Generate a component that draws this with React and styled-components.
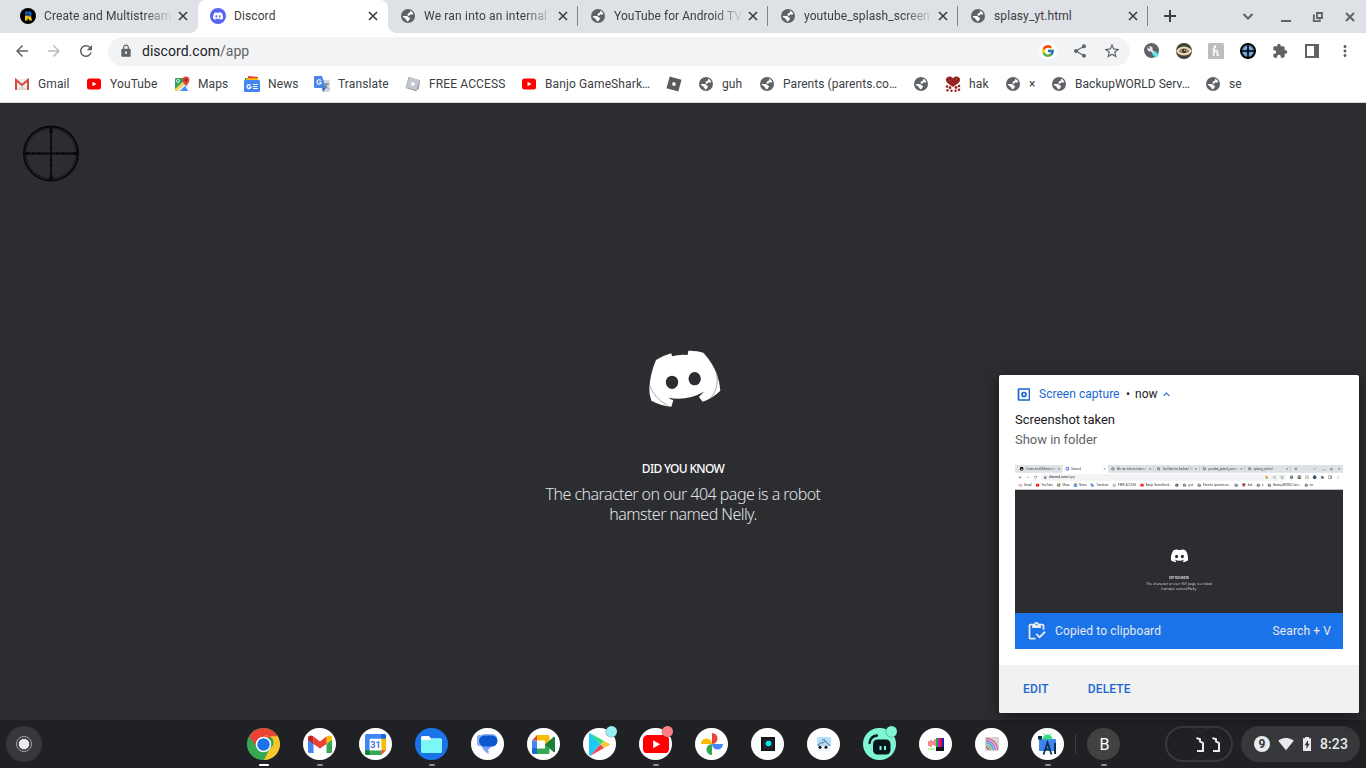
import React from 'react';
import styled, { createGlobalStyle, css } from 'styled-components';
import {
  MdArrowBack, MdArrowForward, MdRefresh, MdLock, MdShare, MdStarBorder, MdExtension, MdMoreVert,
  MdOutlineInventory, MdSignalWifi4Bar, MdExpandLess,
} from 'react-icons/md';
import { FcGoogle } from 'react-icons/fc';
import { SiDiscord } from 'react-icons/si';

const GlobalStyle = createGlobalStyle`
  * { box-sizing: border-box; }
  body { margin: 0; background: #202124; overflow: hidden; font-family: Roboto, "Liberation Sans", sans-serif; }
  svg { display: block; flex: none; }
`;

const Desktop = styled.div`
  position: relative;
  width: 1366px;
  height: 768px;
  overflow: hidden;
  display: flex;
  flex-direction: column;
  background: #202124;
`;

/* ---------- browser ---------- */
const Browser = styled.div`
  width: 1366px;
  height: 720px;
  flex: none;
  display: flex;
  flex-direction: column;
  color: #3c4043;
`;
const TabStrip = styled.div`
  height: 33px;
  display: flex;
  align-items: stretch;
  padding-left: 8px;
  background: #dee1e6;
`;
const Tab = styled.div`
  width: 190px;
  display: flex;
  align-items: center;
  padding: 0 6px 1px 12px;
  position: relative;
  ${(p) => p.$active && css`
    background: #fff;
    border-radius: 8px 8px 0 0;
    &::before, &::after {
      content: '';
      position: absolute;
      bottom: 0;
      width: 8px;
      height: 8px;
    }
    &::before { left: -8px; background: radial-gradient(circle at 0 0, transparent 7.5px, #fff 8px); }
    &::after { right: -8px; background: radial-gradient(circle at 100% 0, transparent 7.5px, #fff 8px); }
  `}
`;
const TabTitle = styled.span`
  width: 128px;
  margin-left: 8px;
  overflow: hidden;
  white-space: nowrap;
  font-size: 12px;
  line-height: 20px;
  letter-spacing: ${(p) => p.$ls}px;
  ${(p) => p.$fade && css`mask-image: linear-gradient(to right, #000 100px, transparent 130px);`}
`;
const CloseSlot = styled.span`
  margin-left: 6px;
`;
const TabDivider = styled.span`
  width: 1px;
  height: 20px;
  margin: 6px -0.4px 0 -0.6px;
  background: #80868b;
  align-self: flex-start;
`;
const WindowControls = styled.div`
  margin-left: auto;
  display: flex;
  align-items: center;
`;
const Toolbar = styled.div`
  height: 37px;
  display: flex;
  align-items: center;
  padding: 0 10px 1px 13px;
  background: #fff;
  color: #5f6368;
`;
const NavButtons = styled.div`
  display: flex;
  gap: 14px;
  width: 95px;
`;
const Omnibox = styled.div`
  width: 1022px;
  height: 29px;
  border-radius: 15px;
  background: #f1f3f4;
  display: flex;
  align-items: center;
  padding: 0 9px 0 11px;
`;
const Url = styled.span`
  margin-left: 9px;
  font-size: 14px;
  line-height: 20px;
  letter-spacing: 0.03px;
  color: #202124;
  flex: 1;
  span { color: #5f6368; }
`;
const OmniActions = styled.div`
  display: flex;
  align-items: center;
  gap: 15px;
`;
const GoogleDisc = styled.span`
  width: 18px;
  height: 18px;
  border-radius: 50%;
  background: #fff;
  display: flex;
  align-items: center;
  justify-content: center;
`;
const Extensions = styled.div`
  display: flex;
  align-items: center;
  gap: 16px;
  margin-left: 14px;
`;
const BookmarkBar = styled.div`
  height: 33px;
  display: flex;
  padding: 0 0 5px 14px;
  background: #fff;
  border-bottom: 1px solid #dadce0;
`;
const Bookmark = styled.div`
  width: ${(p) => p.$w}px;
  display: flex;
  align-items: center;
  gap: 8px;
  font-size: 12px;
  line-height: 16px;
  white-space: nowrap;
  letter-spacing: ${(p) => p.$ls}px;
`;

/* ---------- page ---------- */
const Page = styled.main`
  position: relative;
  flex: 1;
  background: #2c2d31;
  display: flex;
  flex-direction: column;
  align-items: center;
  padding-top: 247px;
`;
const LogoBox = styled.div`
  height: 57px;
  padding-left: 3px;
`;
const TipTitle = styled.h1`
  margin: 54px 0 0;
  font: 500 12px/16px "Noto Sans", sans-serif;
  letter-spacing: -0.68px;
  color: #fff;
`;
const TipText = styled.p`
  margin: 7px 0 0;
  width: 300px;
  text-align: center;
  font: 300 16px/20px "Noto Sans", sans-serif;
  letter-spacing: -0.54px;
  color: #e0e2e5;
`;
const Crosshair = styled.div`
  position: absolute;
  left: 22px;
  top: 22px;
`;

/* ---------- notification ---------- */
const Toast = styled.aside`
  position: absolute;
  left: 999px;
  top: 375px;
  width: 360px;
  height: 338px;
  border-radius: 2px;
  overflow: hidden;
  background: #fff;
  display: flex;
  flex-direction: column;
`;
const ToastShadow = styled.div`
  position: absolute;
  left: 999px;
  top: 375px;
  width: 360px;
  height: 338px;
  box-shadow: 0 4px 14px rgba(0, 0, 0, 0.5);
`;
const ToastHeader = styled.div`
  display: flex;
  align-items: center;
  height: 20px;
  margin: 9px 0 0 18px;
  font-size: 12px;
  color: #202124;
`;
const AppName = styled.span`
  margin-left: 9px;
  margin-right: 6.5px;
  color: #1967d2;
  letter-spacing: 0.03px;
`;
const Now = styled.span`
  margin: 0 2px 0 5px;
`;
const ToastTitle = styled.div`
  margin: 6px 0 0 16px;
  font-size: 13px;
  line-height: 20px;
  letter-spacing: -0.03px;
  color: #202124;
`;
const ToastSub = styled(ToastTitle)`
  margin-top: 0;
  color: #5f6368;
`;
const Preview = styled.div`
  width: 328px;
  height: 184px;
  margin: 15px 16px 0;
  display: flex;
  flex-direction: column;
`;
const Thumb = styled.div`
  height: 148px;
  overflow: hidden;
`;
const Shrink = styled.div`
  width: 1366px;
  height: 720px;
  transform: scale(0.24012);
  transform-origin: 0 0;
`;
const Copied = styled.div`
  height: 36px;
  display: flex;
  align-items: center;
  padding: 0 12px 0 11px;
  background: #1a73e8;
  color: #e8eaed;
  font-size: 12px;
  letter-spacing: 0.12px;
`;
const CopiedLabel = styled.span`
  flex: 1;
  margin-left: 8px;
`;
const ToastActions = styled.div`
  height: 48px;
  margin-top: auto;
  display: flex;
  align-items: center;
  gap: 39px;
  padding-left: 24px;
  background: #f1f1f1;
`;
const TextButton = styled.button`
  border: 0;
  padding: 0;
  background: none;
  font: 500 12px Roboto, sans-serif;
  letter-spacing: 0.15px;
  color: #1967d2;
`;

/* ---------- shelf ---------- */
const Shelf = styled.footer`
  height: 48px;
  display: flex;
  align-items: center;
  padding: 0 6px;
  background: #202124;
`;
const Launcher = styled.div`
  width: 36px;
  height: 36px;
  border-radius: 50%;
  background: #37383b;
  display: flex;
  align-items: center;
  justify-content: center;
`;
const Apps = styled.nav`
  display: flex;
  align-items: center;
  margin-left: 193.5px;
`;
const AppSlot = styled.div`
  position: relative;
  width: 56px;
  height: 48px;
  display: flex;
  align-items: center;
  justify-content: center;
  ${(p) => p.$run && css`
    &::after {
      content: '';
      position: absolute;
      bottom: 2px;
      width: ${p.$run === 'active' ? 10 : 6}px;
      height: 2px;
      border-radius: 1px;
      background: ${p.$run === 'active' ? '#fff' : '#8d8e91'};
    }
  `}
`;
const Disc = styled.div`
  width: 32.5px;
  height: 32.5px;
  border-radius: 50%;
  overflow: hidden;
  display: flex;
  align-items: center;
  justify-content: center;
  background: ${(p) => p.$bg || '#fff'};
  color: #fff;
  font-size: 16px;
`;
const Initial = styled.span`
  padding-left: 2px;
`;
const Badge = styled.i`
  position: absolute;
  right: 11px;
  top: 6px;
  width: 11px;
  height: 11px;
  border-radius: 50%;
  background: ${(p) => p.$c};
  box-shadow: 0 0 0 0.5px rgba(32, 33, 36, 0.55);
`;
const ShelfDivider = styled.span`
  width: 1px;
  height: 20px;
  margin: 0 -0.5px;
  background: #3f4043;
`;
const Holding = styled.div`
  width: 68px;
  height: 36px;
  margin-left: auto;
  border-radius: 18px;
  border: 2px solid #38393c;
  overflow: hidden;
`;
const Status = styled.div`
  width: 119px;
  height: 36px;
  margin-left: 8px;
  border-radius: 18px;
  background: #37383b;
  display: flex;
  align-items: center;
  padding-left: 13px;
  color: #e8eaed;
`;
const Count = styled.span`
  width: 16px;
  height: 16px;
  border-radius: 50%;
  background: #e8eaed;
  color: #37383b;
  font-size: 12px;
  font-weight: 700;
  line-height: 16.5px;
  text-align: center;
`;
const WifiSlot = styled.span`
  margin: 0 5px 0 8px;
`;
const Clock = styled.span`
  margin-left: 5px;
  font-size: 14px;
  font-weight: 500;
  letter-spacing: 0.1px;
`;

/* ---------- glyphs ---------- */
const Globe = () => (
  <svg width="16" height="16" viewBox="-1 -1 16 16">
    <circle cx="7" cy="7" r="7" fill="#5f6368" />
    <path d="M9.200 1.700c1.500.6 2.600 1.700 3.100 3.200-1 .7-2.300.8-3 .3-.7.300-.4 1.300-1.200 1.500-.9.200-1.500-.4-1.600-1.200.1-.9.900-1.300 1.700-1.500.7-.3 1.100-1.200 1-2.300z" fill="#fff" />
    <path d="M1.600 7.200c1.300-.3 3.500-.5 4.800.1.900.4 1.100 1.200 2 1.500.9.300.8 1.200.1 1.700-.6.400-.9.900-1.100 1.700-.6.200-1.100.2-1.700 0V10.700c-.9 0-1.500-.6-1.500-1.500-1-.1-2-.8-2.600-2z" fill="#fff" />
  </svg>
);
const YouTube = ({ w = 14 }) => (
  <svg width={w} height={w * 0.72} viewBox="0 0 28 20">
    <rect width="28" height="20" rx="5" fill="#f00" /><path d="M11 5.700v8.600l7.500-4.300z" fill="#fff" />
  </svg>
);
const YouTubeFav = () => (
  <svg width="16" height="16" viewBox="0 0 16 16">
    <rect x="1" y="2.500" width="14" height="11" rx="2.500" fill="#f00" /><path d="M6.500 5.700v4.600l4-2.300z" fill="#fff" />
  </svg>
);
const Close = ({ c = '#3c4043' }) => (
  <svg width="10" height="10" viewBox="0 0 10 10"><path d="M1 1l8 8M9 1l-8 8" stroke={c} strokeWidth="1.700" /></svg>
);
const RIcon = () => (
  <svg width="16" height="16" viewBox="0 0 16 16">
    <circle cx="8" cy="8" r="8" fill="#000" />
    <path d="M5 3.500h4.500a2.300 2.300 0 0 1 1.800 3.700L10.500 8H7.500V6.500H5z" fill="#1b62c4" />
    <path d="M5 7.500h2.500v.7H11l1 4.300H9.300L8.500 10.500h-1v2H5z" fill="#f5c518" /><path d="M7.500 5.500h1.500v1.300H7.500z" fill="#000" />
  </svg>
);
const DiscordFav = () => (
  <svg width="16" height="16" viewBox="0 0 16 16">
    <circle cx="8" cy="8" r="8" fill="#5865f2" />
    <g transform="translate(3 3)"><SiDiscord size={10} color="#fff" /></g>
  </svg>
);
const GmailOld = () => (
  <svg width="16" height="16" viewBox="0 0 16 16">
    <path d="M1 3h14v11H1z" fill="#ececec" /><path d="M3 14l5-4.500L13 14z" fill="#d8d8d8" />
    <path d="M2 14V4l6 5 6-5v10" fill="none" stroke="#d54b3d" strokeWidth="2" />
  </svg>
);
const MapsIcon = () => (
  <svg width="16" height="16" viewBox="0 0 16 16">
    <rect x="1" y="2" width="13" height="13" rx="1" fill="#34a265" />
    <path d="M2 15L12 6l2 1v7l-1 1z" fill="#e8eaed" /><path d="M6 15l5-5 3 5z" fill="#4a8af4" /><path d="M1 13L12 3l1.500 1.500L3 15H1z" fill="#fcd14b" />
    <path d="M1 8l6-5H2L1 4z" fill="#2d9b58" /><circle cx="4" cy="5" r="1.500" fill="none" stroke="#fff" strokeWidth=".8" />
    <path d="M12 .5a3.500 3.500 0 0 1 3.500 3.500c0 2.500-3.500 6-3.500 6S8.500 6.500 8.500 4A3.500 3.500 0 0 1 12 .5z" fill="#dc4437" /><circle cx="12" cy="4" r="1.200" fill="#7b231e" />
  </svg>
);
const NewsIcon = () => (
  <svg width="16" height="16" viewBox="0 0 16 16">
    <path d="M1 2h4v4H1z" fill="#1f9d56" /><path d="M4 0l10 1V6H4z" fill="#ea4335" /><path d="M2 2.500l12-.5V8H2z" fill="#fbbc04" />
    <rect x="0" y="4" width="16" height="12" rx="1" fill="#4285f4" />
    <path d="M6.600 9.300A2 2 0 1 0 7 11H5" fill="none" stroke="#fff" strokeWidth="1.200" /><path d="M9 8.500h5M9 10.500h4M9 12.500h5" stroke="#fff" />
  </svg>
);
const TranslateIcon = () => (
  <svg width="16" height="16" viewBox="0 0 16 16">
    <path d="M7 4h8a1 1 0 0 1 1 1v10a1 1 0 0 1-1 1H9z" fill="#d5d8dc" /><path d="M0 1a1 1 0 0 1 1-1h7l4 12H1a1 1 0 0 1-1-1z" fill="#4a86e8" /><path d="M8 12h4l-3 4z" fill="#3367d6" />
    <path d="M7 4.800A2.200 2.200 0 1 0 7.300 6.500H5.200" fill="none" stroke="#fff" strokeWidth="1.100" /><path d="M10.500 8h4.500M12.700 7v1.500c0 2-1.500 3.500-2 4M11.200 9.500c.7 1.500 2 2.500 3.300 3" fill="none" stroke="#6b7176" strokeWidth=".9" />
  </svg>
);
const Roblox = ({ light }) => (
  <svg width="16" height="16" viewBox="0 0 16 16">
    {light && <path d="M3.500 1L15 4.200l-1 8-3 3L.5 12z" fill="#9aa1a9" />}
    <path d={light ? 'M4.500 1L14.500 4 11.500 14 1 11.500z' : 'M3.700.5L15.500 3.700 12.300 15.500.5 12.300z'} fill={light ? '#c2c7cd' : '#5a5a5a'} />
    <path d="M6.800 6.100l3.100.8-.8 3.100L6 9.200z" fill="#fff" />
  </svg>
);
const Heart = () => (
  <svg width="16" height="16" viewBox="0 0 16 16">
    <path d="M1 3c1-3 5-3.500 7-.5C10-.5 14 0 15 3c.7 3.500-3 5-7 8C4 8 .5 6.500 1 3z" fill="#97221f" />
    <g fill="#97221f"><circle cx="2" cy="10.500" r="1.300" /><circle cx="5" cy="11.700" r="1.400" /><circle cx="14" cy="10" r="1.300" /><circle cx="11" cy="11.500" r="1.400" /><circle cx="2.500" cy="14.300" r="1.200" /><circle cx="6.500" cy="14.700" r="1.200" /><circle cx="10.500" cy="14.700" r="1.200" /><circle cx="14" cy="13.700" r="1.300" /></g>
    <path d="M4 4l1 1M11 3l1 1M7.500 6.500l1 .5" stroke="#c66" strokeWidth=".7" fill="none" />
  </svg>
);
const SidePanel = () => (
  <svg width="16" height="16" viewBox="-1 -1 16 16"><rect x="1" y="1" width="12" height="12" fill="none" stroke="#5f6368" strokeWidth="2" /><path d="M9 1h4v12H9z" fill="#5f6368" /></svg>
);
const ExtIcons = () => (
  <>
    <svg width="16" height="16" viewBox="0 0 16 16"><circle cx="7.500" cy="7.500" r="7.500" fill="#5f6368" /><circle cx="6" cy="5.800" r="2.600" fill="#e8eaed" /><path d="M6 5.800L4 4M7 7l3 3" stroke="#e8eaed" strokeWidth="1.800" /><path d="M5.800 5.500L3.500 3.200" stroke="#5f6368" strokeWidth="1.300" /><path d="M9.500 9.500l4 4" stroke="#5ee6f2" strokeWidth="4" /></svg>
    <svg width="16" height="16" viewBox="0 0 16 16"><circle cx="8" cy="8" r="8" fill="#3d4235" /><path d="M0 8c3-6 13-6 16 0-3 6-13 6-16 0z" fill="#e9d2ac" /><path d="M3.500 8c2-2.500 7-2.500 9 0-2 2-7 2-9 0z" fill="#c7a980" stroke="#3a332b" strokeWidth=".7" /><circle cx="8" cy="7.700" r="2" fill="#2a2622" /><circle cx="8.500" cy="7.200" r=".8" fill="#ddd" /></svg>
    <svg width="16" height="16" viewBox="0 0 16 16"><rect width="16" height="16" rx="1.500" fill="#bdbdbd" /><path d="M4.500 6.500C7 6 8 3.500 7 3S6 8 5.500 13M6 9.500c1.500-2.500 4-2.500 3.500 0S8.500 13 11 12" fill="none" stroke="#fff" strokeWidth="1.400" /></svg>
    <svg width="16" height="16" viewBox="0 0 16 16"><circle cx="8" cy="8" r="7" fill="#5f8fca" stroke="#050608" strokeWidth="2" /><circle cx="8" cy="8" r="3.800" fill="none" stroke="#a9c3e3" strokeWidth="1" /><path d="M8 0v16M0 8h16" stroke="#000" strokeWidth="1.600" /></svg>
  </>
);
const Battery = () => (
  <svg width="16" height="16" viewBox="0 0 16 16">
    <path d="M6 1h4v1.300h2V15H4V2.300h2z" fill="#e8eaed" /><path d="M9 4L5.500 9.300h2V13L10.700 7.800H9z" fill="#37383b" />
  </svg>
);

const PageLogo = () => (
  <svg width="72" height="57" viewBox="357 60 216 171">
    <path d="M424 70l2 9q24-7 47-4l2-13q25-1 45 6q28 30 40 64q10 25 11 50q-22 22-53 33q-7-7-11-15l15-15q-52 29-107 18q7 6 15 7l-6 20q-33-3-60-18q-7-18-6-38q3-45 20-84q20-13 46-20z" fill="#fff" />
    <path d="M359 166q14 40 54 60M560 128q8 48-18 76" fill="none" stroke="#8b8c8f" strokeWidth="2.200" />
    <ellipse cx="426" cy="157" rx="18.500" ry="20" fill="#2c2d31" /><ellipse cx="494" cy="146" rx="18.500" ry="20" fill="#2c2d31" />
  </svg>
);

/* ---------- shelf app drawings ---------- */
const ChromeApp = () => (
  <svg width="33" height="33" viewBox="0 0 48 48">
    <circle cx="24" cy="24" r="24" fill="#34a853" />
    <path d="M3.200 12A24 24 0 0 1 44.800 12L46 14H24a10 10 0 0 0-9 15z" fill="#ea4335" />
    <path d="M44.800 12A24 24 0 0 1 24 48l9-18a10 10 0 0 0-9-18z" fill="#fbc52d" />
    <circle cx="24" cy="24" r="11.300" fill="#fff" /><circle cx="24" cy="24" r="9" fill="#1a73e8" />
  </svg>
);
const GmailApp = () => (
  <svg width="24" height="18" viewBox="0 0 24 18">
    <path d="M0 4l5.500 4v10H1.500A1.500 1.500 0 0 1 0 16.500z" fill="#4285f4" /><path d="M18.500 8L24 4v12.500a1.500 1.500 0 0 1-1.500 1.500h-4z" fill="#34a853" />
    <path d="M18.500 1.500C21 0 24 0 24 3v2l-5.500 4z" fill="#fbbc04" /><path d="M5.500 1.500L12 6.500l6.500-5V9L12 13.500 5.500 9z" fill="#ea4335" /><path d="M0 3c0-3 3-3 5.500-1.500V9L0 5z" fill="#c5221f" />
  </svg>
);
const CalendarApp = () => (
  <svg width="21" height="21" viewBox="0 0 22 22">
    <path d="M2 0h18a2 2 0 0 1 2 2v4H5v11H0V2a2 2 0 0 1 2-2z" fill="#4285f4" /><path d="M17 0h3a2 2 0 0 1 2 2v3h-5z" fill="#1967d2" />
    <path d="M17 5h5v12h-5z" fill="#fbbc04" /><path d="M5 17h12v5H2a2 2 0 0 1-2-2v-3z" fill="#34a853" /><path d="M0 17h5v5H2a2 2 0 0 1-2-2z" fill="#188038" /><path d="M17 17h5l-5 5z" fill="#ea4335" />
    <path d="M5 5h12v12H5z" fill="#fff" /><text x="11" y="14.500" fontSize="9.500" fontWeight="700" fill="#3b78e7" textAnchor="middle" fontFamily="Roboto">31</text>
  </svg>
);
const FilesApp = () => (
  <svg width="21" height="17" viewBox="0 0 21 17"><path d="M0 1.500A1.500 1.500 0 0 1 1.500 0H8l2 2.500h9.500A1.500 1.500 0 0 1 21 4v2H0z" fill="#fff" /><path d="M0 4h9l2-1.500h8.500A1.500 1.500 0 0 1 21 4v11.500a1.500 1.500 0 0 1-1.500 1.500h-18A1.500 1.500 0 0 1 0 15.500z" fill="#7cf7f7" /></svg>
);
const MessagesApp = () => (
  <svg width="22" height="20" viewBox="0 0 22 20"><path d="M7 0h8a5.500 5.500 0 0 1 2 10.500L12 15 5 12A6 6 0 0 1 0 1.500C2 1 3 1 4 1z" fill="#8fb0f5" /><path d="M4 11h12l-4.500 4v5Q6 17 4 11z" fill="#7ea4f4" /><rect x="2" y="1.500" width="18.500" height="11" rx="5.500" fill="#0b57d0" /></svg>
);
const MeetApp = () => (
  <svg width="23" height="19" viewBox="0 0 23 19"><path d="M5 5.500h8v8H5z" fill="#fff" /><path d="M5 0v5.500H0z" fill="#ea4335" /><path d="M0 5.500h5V13H0z" fill="#4285f4" /><path d="M0 13h5v6H1.500A1.500 1.500 0 0 1 0 17.500z" fill="#1967d2" /><path d="M5 0h11a1.500 1.500 0 0 1 1.500 1.500V7L13 10V5.500H5z" fill="#fbbc04" /><path d="M5 13.500h8V9.500l4.500-3v11A1.500 1.500 0 0 1 16 19H5z" fill="#34a853" /><path d="M13 9.500L21.500 2c.8-.6 1.500-.2 1.500.6v13.800c0 .9-.7 1.200-1.500.6z" fill="#188038" /></svg>
);
const PlayApp = () => (
  <svg width="21" height="23" viewBox="0 0 21 23"><path d="M1 0l10.500 11.500L1 23c-.7-.4-1-1-1-2V2c0-1 .3-1.600 1-2z" fill="#1fc8f5" /><path d="M1 0l14 8-3.500 3.500z" fill="#2ce07b" /><path d="M15 8l5 2.500c1 .6 1 1.400 0 2L15 15l-3.500-3.500z" fill="#fdc93b" /><path d="M1 23l10.500-11.500L15 15z" fill="#f3424f" /></svg>
);
const PhotosApp = () => (
  <svg width="22" height="22" viewBox="0 0 22 22"><path d="M11 0a5.500 5.500 0 0 1 0 11z" fill="#ea4335" /><path d="M0 11a5.500 5.500 0 0 1 11 0z" fill="#fbbc04" /><path d="M11 11a5.500 5.500 0 0 0 0 11z" fill="#34a853" /><path d="M11 11h11a5.500 5.500 0 0 1-11 0z" fill="#4285f4" /></svg>
);
const DarkTileApp = () => (
  <svg width="14" height="14" viewBox="0 0 14 14"><rect width="14" height="14" fill="#151719" /><rect x="2" y="2" width="10" height="10" fill="#222527" /><circle cx="7.500" cy="6.500" r="2.800" fill="#0ee" /></svg>
);
const CloudTileApp = () => (
  <svg width="14" height="14" viewBox="0 0 14 14"><rect width="14" height="14" rx="2" fill="#b5dff9" /><path d="M1.500 9C2 6 4 5.500 6 6c1.500-2 3.500-1.500 5 1 1.500.5 2 1.500 2 3" fill="none" stroke="#42566e" strokeWidth=".9" /><path d="M0 9h14v3a2 2 0 0 1-2 2H2a2 2 0 0 1-2-2z" fill="#eef7fd" /><circle cx="3" cy="10.300" r="1.500" fill="#111" /><circle cx="9" cy="10.300" r="1.500" fill="#111" /><path d="M5 4l2-2 2 3" stroke="#4d7da8" fill="none" /></svg>
);
const StreamApp = () => (
  <svg width="33" height="33" viewBox="0 0 33 33"><path d="M6.500 15C7 11 9.500 8 14 7.500" fill="none" stroke="#09161d" strokeWidth="2.300" strokeLinecap="round" /><rect x="10" y="11.500" width="17.500" height="15" rx="4.500" fill="#09161d" /><path d="M17.500 18v4M22 18v4" stroke="#80f5d2" strokeWidth="2" /></svg>
);
const BarsApp = () => (
  <svg width="16" height="13" viewBox="0 0 16 13"><path d="M1 8V3M3 9V2M5 7V3M7 8V1" stroke="#ef3d4d" strokeWidth="1.200" /><path d="M0 11h7" stroke="#6e6" /><path d="M8 0h2v9H8z" fill="#18b040" /><path d="M10 0h2v9h-2z" fill="#c01cc0" /><path d="M12 0h2v9h-2z" fill="#d21c1c" /><path d="M14 0h2v9h-2z" fill="#1c1ccc" /><path d="M8 9h8v4H8z" fill="#15151f" /></svg>
);
const RainbowApp = () => (
  <svg width="14" height="14" viewBox="0 0 14 14"><rect width="14" height="14" rx="1" fill="#d4d4d4" /><g fill="none" strokeWidth="1.400"><path d="M1 1.500a11.500 11.500 0 0 1 11.500 11.500" stroke="#e0638a" /><path d="M1 3.700a9.300 9.300 0 0 1 9.300 9.300" stroke="#a06fe0" /><path d="M1 5.900a7.100 7.100 0 0 1 7.100 7.100" stroke="#3fa4e0" /><path d="M1 8.100a4.900 4.900 0 0 1 4.900 4.900" stroke="#6cc56a" /><path d="M1 10.300a2.700 2.700 0 0 1 2.700 2.700" stroke="#c0548a" /></g></svg>
);
const AndroidStudioApp = () => (
  <svg width="19" height="22" viewBox="0 0 19 22"><rect x="1" y="6" width="17" height="12" rx="1" fill="#3f83f1" /><path d="M4.500 6.500a5 5 0 0 1 10 0z" fill="#3ddc84" /><path d="M5.500.5l1.500 2M13.500.5l-1.500 2" stroke="#3ddc84" strokeWidth=".9" /><path d="M0 3h4v3.500H0z" fill="#073042" /><path d="M5.500 21.500l4-12 4 12M7 17q2.500-1.500 5 0" fill="none" stroke="#073042" strokeWidth="1.700" /><path d="M17 10v11" stroke="#073042" strokeWidth="2" /></svg>
);

/* ---------- data ---------- */
const TABS = [
  { title: 'Create and Multistream', icon: <RIcon />, fade: true },
  { title: 'Discord', icon: <DiscordFav />, active: true },
  { title: 'We ran into an internal', icon: <Globe />, fade: true, divider: true, ls: 0.18 },
  { title: 'YouTube for Android TV', icon: <Globe />, fade: true, divider: true, ls: 0.04 },
  { title: 'youtube_splash_screen', icon: <Globe />, fade: true, divider: true, ls: 0.06 },
  { title: 'splasy_yt.html', icon: <Globe />, divider: true },
];
const BOOKMARKS = [
  ['Gmail', 72, <GmailOld />], ['YouTube', 88, <YouTubeFav />], ['Maps', 70, <MapsIcon />], ['News', 70, <NewsIcon />],
  ['Translate', 91, <TranslateIcon />], ['FREE ACCESS', 116, <Roblox light />], ['Banjo GameShark…', 145, <YouTubeFav />],
  ['', 32, <Roblox />], ['guh', 61, <Globe />], ['Parents (parents.co…', 154, <Globe />, 0.06], ['', 32, <Globe />],
  ['hak', 60, <Heart />], ['×', 46, <Globe />], ['BackupWORLD Serv…', 154, <Globe />, 0.03], ['se', 60, <Globe />],
];
const APPS = [
  { bg: '#34a853', icon: <ChromeApp />, run: 'active' }, { icon: <GmailApp />, run: 'idle' }, { icon: <CalendarApp /> },
  { bg: '#1a73e8', icon: <FilesApp />, run: 'idle' }, { icon: <MessagesApp /> }, { icon: <MeetApp /> },
  { icon: <PlayApp />, badge: '#95f0f2' }, { icon: <YouTube w={26} />, badge: '#ff7f84', run: 'idle' }, { icon: <PhotosApp /> },
  { icon: <DarkTileApp /> }, { icon: <CloudTileApp /> }, { bg: '#80f5d2', icon: <StreamApp />, badge: '#80f5d2' },
  { icon: <BarsApp /> }, { icon: <RainbowApp /> }, { icon: <AndroidStudioApp />, run: 'idle' },
];

function BrowserWindow({ upright, overlay }) {
  return (
    <Browser>
      <TabStrip>
        {TABS.map((t) => (
          <React.Fragment key={t.title}>
            <Tab $active={t.active}>
              {t.icon}
              <TabTitle $fade={t.fade} $ls={t.ls ?? 0.1}>{t.title}</TabTitle>
              <CloseSlot><Close /></CloseSlot>
            </Tab>
            {t.divider && <TabDivider />}
          </React.Fragment>
        ))}
        <svg width="44" height="32" viewBox="0 0 44 32"><path d="M22 10v12M16 16h12" stroke="#3c4043" strokeWidth="2" /></svg>
        <WindowControls>
          <svg width="130" height="33" viewBox="1236 0 130 33" fill="none" stroke="#5f6368" strokeWidth="2">
            <path d="M1243.500 14l4.500 4.500 4.500-4.500" /><path d="M1281 21h10" />
            <path d="M1317 13h5v5h-5zM1315 15.500h-1.200v5.700h6v-1.700" strokeWidth="1.800" /><path d="M1346 13l8 8M1354 13l-8 8" />
          </svg>
        </WindowControls>
      </TabStrip>
      <Toolbar>
        <NavButtons>
          <MdArrowBack size={18} /><MdArrowForward size={18} color="#babcbe" /><MdRefresh size={18} />
        </NavButtons>
        <Omnibox>
          <MdLock size={14} />
          <Url>discord.com<span>/app</span></Url>
          <OmniActions><GoogleDisc><FcGoogle size={14} /></GoogleDisc><MdShare size={16} /><MdStarBorder size={18} /></OmniActions>
        </Omnibox>
        <Extensions>
          <ExtIcons /><MdExtension size={16} /><SidePanel /><MdMoreVert size={18} />
        </Extensions>
      </Toolbar>
      <BookmarkBar>
        {BOOKMARKS.map(([label, w, icon, ls = 0.12], i) => (
          <Bookmark key={i} $w={w} $ls={ls}>{icon}{label}</Bookmark>
        ))}
      </BookmarkBar>
      <Page>
        {overlay}
        <LogoBox>{upright ? <SiDiscord size={72} color="#fff" style={{ marginTop: -8 }} /> : <PageLogo />}</LogoBox>
        <TipTitle>DID YOU KNOW</TipTitle>
        <TipText>The character on our 404 page is a robot hamster named Nelly.</TipText>
      </Page>
    </Browser>
  );
}

const Reticle = () => (
  <Crosshair>
    <svg width="58" height="58" viewBox="0 0 58 58" fill="none" stroke="#08090a">
      <circle cx="29" cy="28.500" r="27" strokeWidth="2" /><circle cx="29" cy="28.500" r="25" stroke="#17181a" strokeWidth="1" />
      <path d="M29 2v54M2 28.500h54" strokeWidth="1.800" />
      <path d="M29 2v6M29 50v6M2 28.500h5M51 28.500h5" strokeWidth="3" />
      <path d="M27.500 17h3M27.500 23h3M27.500 35h3M27.500 41h3M17 27v3M23 27v3M35 27v3M41 27v3M11 27v3M47 27v3" strokeWidth="1" />
    </svg>
  </Crosshair>
);

export default function App() {
  return (
    <Desktop>
      <GlobalStyle />
      <BrowserWindow overlay={<Reticle />} />
      <Shelf>
        <Launcher>
          <svg width="18" height="18" viewBox="0 0 18 18"><circle cx="9" cy="9" r="7.500" fill="none" stroke="#a4a5a8" /><circle cx="9" cy="9" r="5.300" fill="#e8eaed" /></svg>
        </Launcher>
        <Apps>
          {APPS.map((a, i) => (
            <AppSlot key={i} $run={a.run}><Disc $bg={a.bg}>{a.icon}</Disc>{a.badge && <Badge $c={a.badge} />}</AppSlot>
          ))}
          <ShelfDivider />
          <AppSlot $run="idle"><Disc $bg="#424242"><Initial>B</Initial></Disc></AppSlot>
        </Apps>
        <Holding>
          <svg width="64" height="32" viewBox="0 0 64 32" fill="none">
            <path d="M24 1a15 15 0 0 1 0 30M40 1a15 15 0 0 1 0 30M24 31a15 15 0 0 0 8-3a15 15 0 0 0 8 3M24 1a15 15 0 0 1 8 3a15 15 0 0 1 8-3" stroke="#28292c" strokeWidth="1.300" />
            <path d="M29.500 10l3.500 1.200v2.300l3 1.500v8h-6M45.500 10l3.500 1.200v2.300l3 1.500v8h-6" stroke="#e8eaed" strokeWidth="2" />
          </svg>
        </Holding>
        <Status>
          <Count>9</Count>
          <WifiSlot><MdSignalWifi4Bar size={16} /></WifiSlot>
          <Battery />
          <Clock>8:23</Clock>
        </Status>
      </Shelf>
      <ToastShadow />
      <Toast>
        <ToastHeader>
          <svg width="13" height="13" viewBox="-.5 0 13 13" fill="none" stroke="#1967d2"><rect x="1" y="1" width="11" height="11" rx=".5" strokeWidth="1.700" /><circle cx="6.500" cy="6.500" r="2" strokeWidth="1.700" /></svg>
          <AppName>Screen capture</AppName>•<Now>now</Now><MdExpandLess size={13} color="#1967d2" />
        </ToastHeader>
        <ToastTitle>Screenshot taken</ToastTitle>
        <ToastSub>Show in folder</ToastSub>
        <Preview>
          <Thumb><Shrink><BrowserWindow upright /></Shrink></Thumb>
          <Copied><MdOutlineInventory size={21} /><CopiedLabel>Copied to clipboard</CopiedLabel>Search + V</Copied>
        </Preview>
        <ToastActions><TextButton>EDIT</TextButton><TextButton>DELETE</TextButton></ToastActions>
      </Toast>
    </Desktop>
  );
}
